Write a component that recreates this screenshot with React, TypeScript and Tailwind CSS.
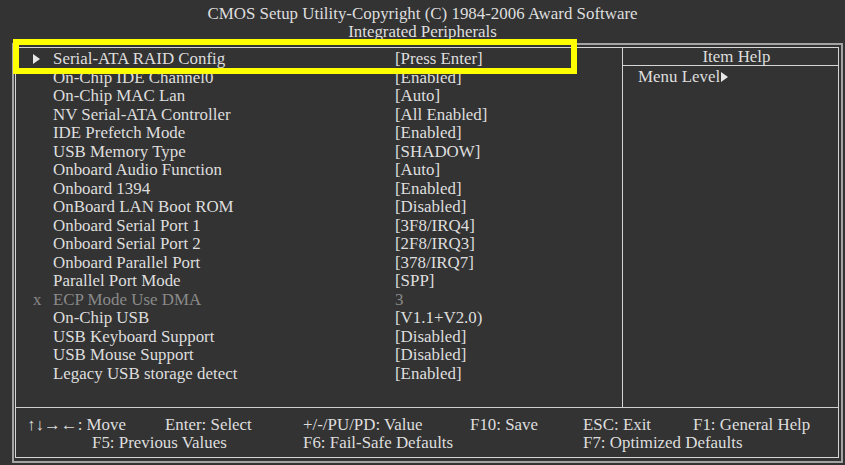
const rows: { name: string; value: string; off?: boolean }[] = [
  { name: "Serial-ATA RAID Config", value: "[Press Enter]" },
  { name: "On-Chip IDE Channel0", value: "[Enabled]" },
  { name: "On-Chip MAC Lan", value: "[Auto]" },
  { name: "NV Serial-ATA Controller", value: "[All Enabled]" },
  { name: "IDE Prefetch Mode", value: "[Enabled]" },
  { name: "USB Memory Type", value: "[SHADOW]" },
  { name: "Onboard Audio Function", value: "[Auto]" },
  { name: "Onboard 1394", value: "[Enabled]" },
  { name: "OnBoard LAN Boot ROM", value: "[Disabled]" },
  { name: "Onboard Serial Port 1", value: "[3F8/IRQ4]" },
  { name: "Onboard Serial Port 2", value: "[2F8/IRQ3]" },
  { name: "Onboard Parallel Port", value: "[378/IRQ7]" },
  { name: "Parallel Port Mode", value: "[SPP]" },
  { name: "ECP Mode Use DMA", value: "3", off: true },
  { name: "On-Chip USB", value: "[V1.1+V2.0)" },
  { name: "USB Keyboard Support", value: "[Disabled]" },
  { name: "USB Mouse Support", value: "[Disabled]" },
  { name: "Legacy USB storage detect", value: "[Enabled]" },
];

const Tri = ({ className }: { className?: string }) => (
  <svg width="7" height="10" viewBox="0 0 7 10" className={className}>
    <path d="M0 0 L7 5 L0 10 Z" fill="#e8e8e8" />
  </svg>
);

const App = () => {
  return (
    <div
      className="relative w-[845px] h-[465px] bg-[#333333] text-[#dedede] text-[16.9px] overflow-hidden"
      style={{ fontFamily: '"Liberation Serif", "Times New Roman", serif' }}
    >
      {/* title */}
      <div className="h-[43px] pt-[5px] text-center leading-[18px]">
        <div>CMOS Setup Utility-Copyright (C) 1984-2006 Award Software</div>
        <div>Integrated Peripherals</div>
      </div>

      {/* double frame */}
      <div className="ml-[12px] w-[831px] border-2 border-[#a4a4a4] pt-[2px] pl-[1px] pr-[2px] pb-[3px]">
        <div className="border border-[#d6d6d6]">
          <div className="flex h-[359px]">
            <div className="w-[606px] pt-[2px] leading-[18.5px]">
              {rows.map((r, i) => (
                <div key={r.name} className={"flex " + (r.off ? "text-[#8a8a8a]" : "")}>
                  <div className="w-[37px] pl-[17px] flex items-center">
                    {i === 0 && <Tri />}
                    {r.off && <span>x</span>}
                  </div>
                  <div className="w-[342px]">{r.name}</div>
                  <div>{r.value}</div>
                </div>
              ))}
            </div>
            <div className="flex-1 border-l border-[#d6d6d6]">
              <div className="h-[18px] border-b border-[#d6d6d6] text-center leading-[17px] pl-[12px]">
                Item Help
              </div>
              <div className="pt-[2px] pl-[15px] leading-[18.5px] flex items-center gap-[1px]">
                Menu Level
                <Tri />
              </div>
            </div>
          </div>

          {/* key legend */}
          <div className="border-t border-[#cfcfcf] h-[50px] pt-[8px] pl-[11px] leading-[18px] grid grid-cols-[276px_280px_1fr]">
            <div>
              <div className="flex">
                <span className="w-[138px]">↑↓→←: Move</span>
                <span>Enter: Select</span>
              </div>
              <div className="pl-[65px]">F5: Previous Values</div>
            </div>
            <div>
              <div className="flex">
                <span className="w-[167px]">+/-/PU/PD: Value</span>
                <span>F10: Save</span>
              </div>
              <div>F6: Fail-Safe Defaults</div>
            </div>
            <div>
              <div className="flex">
                <span className="w-[110px]">ESC: Exit</span>
                <span>F1: General Help</span>
              </div>
              <div>F7: Optimized Defaults</div>
            </div>
          </div>
        </div>
      </div>

      {/* highlight annotation */}
      <div className="absolute left-[13px] top-[39px] w-[564px] h-[35px] border-[6px] border-[#ffff00]" />
    </div>
  );
};

export default App;
